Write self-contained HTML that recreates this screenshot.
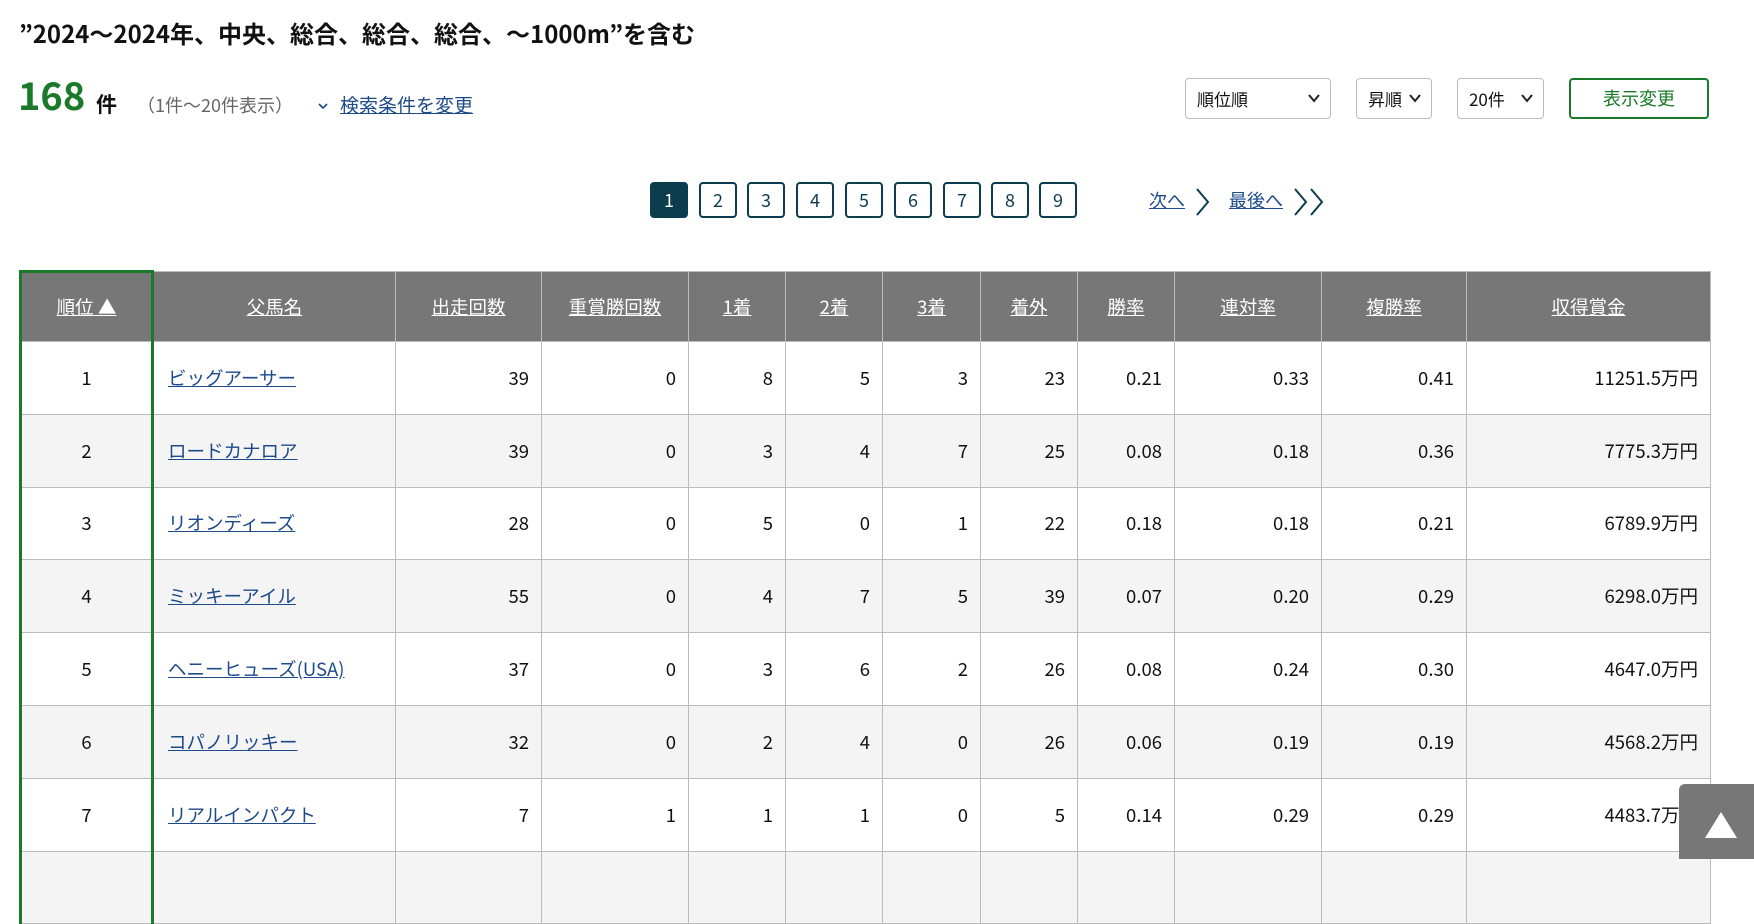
<!DOCTYPE html>
<html><head><meta charset="utf-8">
<style>
*{box-sizing:border-box;margin:0;padding:0}
body{width:1754px;height:859px;overflow:hidden;background:#fff;font-family:"Noto Sans CJK JP","Liberation Sans",sans-serif;color:#111;position:relative}
.a{position:absolute;white-space:nowrap}
a{color:#1d4a8a;text-decoration:underline}
.title{left:19px;top:16px;font-size:24px;font-weight:bold;line-height:34px}
.cnt{left:18px;top:72px;font-size:38px;font-weight:bold;color:#1a7a2a;line-height:44px}
.ken{left:96px;top:91px;font-size:21px;font-weight:bold;line-height:26px}
.sub{left:137px;top:92px;font-size:18px;color:#666;line-height:26px}
.lnk{left:340px;top:92px;font-size:19px;line-height:26px}
.sel{top:78px;height:41px;border:1px solid #bbb;border-radius:4px;font-size:17px;line-height:39px;padding-left:11px}
.sel svg{position:absolute;right:10px;top:15px}
.btn{left:1569px;top:78px;width:140px;height:41px;border:2px solid #1a7a2a;border-radius:4px;color:#1a7a2a;font-size:18px;text-align:center;line-height:37px}
.pg{top:182px;width:38px;height:36px;border:2px solid #0b3d4f;border-radius:4px;text-align:center;line-height:32px;font-size:18px;color:#0b3d4f}
.pg.on{background:#0b3d4f;color:#fff}
table{position:absolute;left:19px;top:270px;width:1690px;border-collapse:collapse;table-layout:fixed;font-size:18.5px}
th{background:#777;color:#fff;font-weight:normal;height:70px;border:1px solid #bbb;text-decoration:underline;text-align:center}
td{height:72.8px;border:1px solid #bbb;text-align:right;padding-right:12px}
tr:nth-child(odd) td{background:#f4f4f4}
td:first-child{text-align:center;padding-right:0}
td:nth-child(2){text-align:left;padding-left:14px}
th:first-child,td:first-child{border-left:3px solid #1a7a2a;border-right:3px solid #1a7a2a}
th:first-child{border-top:3px solid #1a7a2a}
.top{left:1679px;top:784px;width:75px;height:75px;background:#777;border-radius:6px 0 0 0}
</style></head><body>
<div class="a title">”2024～2024年、中央、総合、総合、総合、～1000m”を含む</div>
<div class="a cnt">168</div>
<div class="a ken">件</div>
<div class="a sub">（1件～20件表示）</div>
<svg class="a" style="left:318px;top:102px" width="10" height="8" viewBox="0 0 10 8"><path d="M1 2l4 4 4-4" fill="none" stroke="#1d4a8a" stroke-width="1.6"/></svg>
<div class="a lnk"><a>検索条件を変更</a></div>

<div class="a sel" style="left:1185px;width:146px">順位順<svg width="12" height="9" viewBox="0 0 12 9"><path d="M1 1l5 6 5-6" fill="none" stroke="#222" stroke-width="2"/></svg></div>
<div class="a sel" style="left:1356px;width:76px">昇順<svg width="12" height="9" viewBox="0 0 12 9"><path d="M1 1l5 6 5-6" fill="none" stroke="#222" stroke-width="2"/></svg></div>
<div class="a sel" style="left:1457px;width:87px">20件<svg width="12" height="9" viewBox="0 0 12 9"><path d="M1 1l5 6 5-6" fill="none" stroke="#222" stroke-width="2"/></svg></div>
<div class="a btn">表示変更</div>

<div class="a pg on" style="left:650px">1</div>
<div class="a pg" style="left:699px">2</div>
<div class="a pg" style="left:747px">3</div>
<div class="a pg" style="left:796px">4</div>
<div class="a pg" style="left:845px">5</div>
<div class="a pg" style="left:894px">6</div>
<div class="a pg" style="left:943px">7</div>
<div class="a pg" style="left:991px">8</div>
<div class="a pg" style="left:1039px">9</div>
<div class="a" style="left:1149px;top:187px;font-size:18px;line-height:26px"><a>次へ</a></div>
<svg class="a" style="left:1195px;top:187px" width="16" height="30" viewBox="0 0 16 30"><path d="M2 2l11 13-11 13" fill="none" stroke="#0b3d4f" stroke-width="2"/></svg>
<div class="a" style="left:1229px;top:187px;font-size:18px;line-height:26px"><a>最後へ</a></div>
<svg class="a" style="left:1293px;top:187px" width="36" height="30" viewBox="0 0 36 30"><path d="M2 2l11 13-11 13M18 2l11 13-11 13" fill="none" stroke="#0b3d4f" stroke-width="2"/></svg>

<table>
<colgroup><col style="width:132px"><col style="width:243px"><col style="width:146px"><col style="width:147px"><col style="width:97px"><col style="width:97px"><col style="width:98px"><col style="width:97px"><col style="width:97px"><col style="width:147px"><col style="width:145px"><col style="width:244px"></colgroup>
<tr><th>順位 ▲</th><th>父馬名</th><th>出走回数</th><th>重賞勝回数</th><th>1着</th><th>2着</th><th>3着</th><th>着外</th><th>勝率</th><th>連対率</th><th>複勝率</th><th>収得賞金</th></tr>
<tr><td>1</td><td><a>ビッグアーサー</a></td><td>39</td><td>0</td><td>8</td><td>5</td><td>3</td><td>23</td><td>0.21</td><td>0.33</td><td>0.41</td><td>11251.5万円</td></tr>
<tr><td>2</td><td><a>ロードカナロア</a></td><td>39</td><td>0</td><td>3</td><td>4</td><td>7</td><td>25</td><td>0.08</td><td>0.18</td><td>0.36</td><td>7775.3万円</td></tr>
<tr><td>3</td><td><a>リオンディーズ</a></td><td>28</td><td>0</td><td>5</td><td>0</td><td>1</td><td>22</td><td>0.18</td><td>0.18</td><td>0.21</td><td>6789.9万円</td></tr>
<tr><td>4</td><td><a>ミッキーアイル</a></td><td>55</td><td>0</td><td>4</td><td>7</td><td>5</td><td>39</td><td>0.07</td><td>0.20</td><td>0.29</td><td>6298.0万円</td></tr>
<tr><td>5</td><td><a>ヘニーヒューズ(USA)</a></td><td>37</td><td>0</td><td>3</td><td>6</td><td>2</td><td>26</td><td>0.08</td><td>0.24</td><td>0.30</td><td>4647.0万円</td></tr>
<tr><td>6</td><td><a>コパノリッキー</a></td><td>32</td><td>0</td><td>2</td><td>4</td><td>0</td><td>26</td><td>0.06</td><td>0.19</td><td>0.19</td><td>4568.2万円</td></tr>
<tr><td>7</td><td><a>リアルインパクト</a></td><td>7</td><td>1</td><td>1</td><td>1</td><td>0</td><td>5</td><td>0.14</td><td>0.29</td><td>0.29</td><td>4483.7万円</td></tr>
<tr><td></td><td></td><td></td><td></td><td></td><td></td><td></td><td></td><td></td><td></td><td></td><td></td></tr>
</table>

<div class="a top"><svg style="position:absolute;left:26px;top:28px" width="32" height="26" viewBox="0 0 32 26"><path d="M16 0L32 26H0z" fill="#fff"/></svg></div>
</body></html>
